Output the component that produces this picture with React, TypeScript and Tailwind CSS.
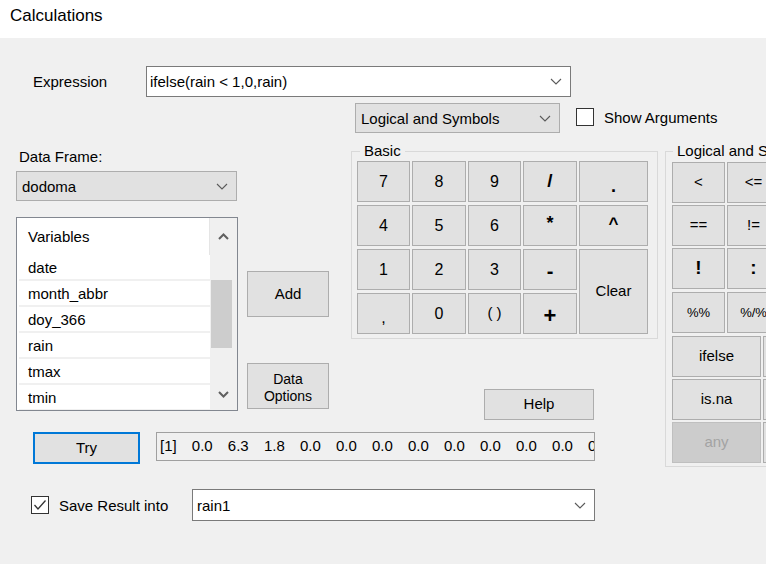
import React from "react";

function Chevron({ className = "" }: { className?: string }) {
  return (
    <svg width="12" height="7" viewBox="0 0 12 7" className={className}>
      <polyline points="1,1 6,6 11,1" fill="none" stroke="#5a5a5a" strokeWidth="1.1" />
    </svg>
  );
}

function Combo({ text, gray, className = "" }: { text: string; gray?: boolean; className?: string }) {
  return (
    <div
      className={`flex items-center justify-between border ${
        gray ? "border-[#adadad] bg-[#e1e1e1]" : "border-[#7a7a7a] bg-white"
      } ${className}`}
    >
      <span className="text-[15px] leading-none">{text}</span>
      <Chevron className="mr-[8px]" />
    </div>
  );
}

function Check({ checked }: { checked?: boolean }) {
  return (
    <div className="flex h-[18px] w-[18px] shrink-0 items-center justify-center border border-[#333333] bg-white">
      {checked && (
        <svg width="14" height="12" viewBox="0 0 14 12">
          <polyline points="1.5,6 5,10 12.5,1.5" fill="none" stroke="#333333" strokeWidth="1.3" />
        </svg>
      )}
    </div>
  );
}

function Btn({
  children,
  className = "",
  disabled,
}: {
  children?: React.ReactNode;
  className?: string;
  disabled?: boolean;
}) {
  return (
    <div
      className={`flex shrink-0 items-center justify-center border ${
        disabled ? "border-[#bfbfbf] bg-[#cccccc] text-[#a3a3a3]" : "border-[#adadad] bg-[#e1e1e1] text-black"
      } ${className}`}
    >
      {children}
    </div>
  );
}

const variables = ["date", "month_abbr", "doy_366", "rain", "tmax", "tmin"];

export default function App() {
  const smallRows = [
    { mt: "mt-[2px]", items: ["<", "<=", ">", ">="] },
    { mt: "mt-[2px]", items: ["==", "!=", "&", "|"] },
    { mt: "mt-[2px]", items: ["!", ":", "(", ")"] },
    { mt: "mt-[3px]", items: ["%%", "%/%", "%in%", "xor"] },
  ];
  const wideRows = [
    { mt: "mt-[3px]", items: ["ifelse", "which"], disabled: false },
    { mt: "mt-[2px]", items: ["is.na", "!is.na"], disabled: false },
    { mt: "mt-[2px]", items: ["any", "all"], disabled: true },
  ];

  return (
    <div className="h-[564px] w-[766px] overflow-hidden bg-[#f0f0f0] font-['Liberation_Sans',Arial,sans-serif] text-[15px] text-black">
      {/* Title bar */}
      <div className="h-[38px] bg-white pl-[10px] pt-[4px] text-[17px] leading-[24px]">Calculations</div>

      {/* Expression row */}
      <div className="mt-[28px] flex h-[31px] items-center">
        <span className="ml-[33px] w-[113px] leading-none">Expression</span>
        <Combo className="h-[31px] w-[425px] pl-[3px]" text="ifelse(rain < 1,0,rain)" />
      </div>

      {/* Logical dropdown + Show arguments */}
      <div className="mt-[6px] flex h-[30px] items-center">
        <Combo gray className="ml-[355px] h-[30px] w-[205px] pl-[5px]" text="Logical and Symbols" />
        <div className="ml-[16px] -mt-[3px]">
          <Check />
        </div>
        <span className="ml-[10px] -mt-[2px] leading-none">Show Arguments</span>
      </div>

      {/* Main */}
      <div className="flex items-start">
        <div className="w-[657px] shrink-0">
          <div className="flex items-start">
            {/* Left panel */}
            <div className="ml-[16px] w-[313px]">
              <div className="ml-[3px] mt-[15px] leading-[18px]">Data Frame:</div>
              <Combo gray className="mt-[5px] h-[30px] w-[221px] pl-[5px]" text="dodoma" />
              <div className="mt-[16px] flex items-start">
                {/* Listbox */}
                <div className="flex h-[194px] w-[222px] overflow-hidden border border-[#828790] bg-white">
                  <div className="w-[193px] pl-[2px]">
                    <div className="flex h-[37px] items-center border-r border-[#e5e5e5] pl-[9px] pt-[1px]">Variables</div>
                    {variables.map((v) => (
                      <div key={v} className="flex h-[26px] items-center border-b-2 border-[#f0f0f0] pl-[9px] pt-[3px]">
                        {v}
                      </div>
                    ))}
                  </div>
                  <div className="relative flex w-[27px] flex-col items-center bg-[#f0f0f0]">
                    <svg width="11" height="7" viewBox="0 0 11 7" className="mt-[15px]">
                      <polyline points="1,6 5.5,1.5 10,6" fill="none" stroke="#606060" strokeWidth="2" />
                    </svg>
                    <div className="ml-[-4px] mt-[40px] h-[68px] w-[21px] bg-[#cdcdcd]" />
                    <svg width="11" height="7" viewBox="0 0 11 7" className="mt-[43px]">
                      <polyline points="1,1 5.5,5.5 10,1" fill="none" stroke="#606060" strokeWidth="2" />
                    </svg>
                  </div>
                </div>
                <div className="ml-[9px] flex flex-col">
                  <Btn className="mt-[54px] h-[46px] w-[82px]">Add</Btn>
                  <Btn className="mt-[46px] h-[46px] w-[82px] flex-col pt-[3px] text-[14px] leading-[17px]">
                    <span>Data</span>
                    <span>Options</span>
                  </Btn>
                </div>
              </div>
            </div>

            {/* Basic group + Help */}
            <div className="ml-[22px]">
              <fieldset className="mt-[9px] w-[307px] border border-[#d9d9d9] pb-[4px] pl-[5px] pr-[8px]">
                <legend className="ml-[3px] px-[4px] leading-[18px]">Basic</legend>
                <div className="mt-[1px] grid grid-cols-[53px_54px_53px_54px_69px] grid-rows-[41px_41px_41px_41px] gap-x-[2px] gap-y-[3px] text-[16px]">
                  <Btn>7</Btn>
                  <Btn>8</Btn>
                  <Btn>9</Btn>
                  <Btn className="text-[19px] font-bold">/</Btn>
                  <Btn className="pt-[10px] text-[18px] font-bold">.</Btn>
                  <Btn>4</Btn>
                  <Btn>5</Btn>
                  <Btn>6</Btn>
                  <Btn className="pb-[4px] text-[18px] font-bold">*</Btn>
                  <Btn className="pb-[4px] text-[17px] font-bold">^</Btn>
                  <Btn>1</Btn>
                  <Btn>2</Btn>
                  <Btn>3</Btn>
                  <Btn className="pt-[2px] text-[20px] font-bold">-</Btn>
                  <Btn className="row-span-2 text-[15px]">Clear</Btn>
                  <Btn className="pt-[8px]">,</Btn>
                  <Btn>0</Btn>
                  <Btn className="text-[15px]">( )</Btn>
                  <Btn className="pt-[4px] text-[22px] font-bold">+</Btn>
                </div>
              </fieldset>
              <Btn className="ml-[133px] mt-[50px] h-[31px] w-[110px]">Help</Btn>
            </div>
          </div>

          {/* Try row */}
          <div className="mt-[12px] flex items-start">
            <div className="ml-[33px] flex h-[32px] w-[107px] items-center justify-center border-2 border-[#0078d7] bg-[#e1e1e1]">
              Try
            </div>
            <div className="ml-[16px] flex h-[29px] w-[439px] items-center overflow-hidden whitespace-nowrap border border-[#a0a0a0] bg-[#f0f0f0] pl-[3px] [word-spacing:11px]">
              [1] 0.0 6.3 1.8 0.0 0.0 0.0 0.0 0.0 0.0 0.0 0.0 0.0
            </div>
          </div>

          {/* Save row */}
          <div className="mt-[25px] flex h-[32px] items-center">
            <div className="ml-[31px]">
              <Check checked />
            </div>
            <span className="ml-[10px] w-[133px] leading-none">Save Result into</span>
            <Combo className="h-[32px] w-[403px] pl-[4px]" text="rain1" />
          </div>
        </div>

        {/* Logical and Symbols group */}
        <fieldset className="ml-[8px] mt-[9px] w-[400px] shrink-0 border border-[#d9d9d9] pb-[3px] pl-[6px]">
          <legend className="ml-[1px] whitespace-nowrap px-[4px] leading-[18px]">Logical and Symbols</legend>
          <div className="flex flex-col">
            {smallRows.map((r, i) => (
              <div key={i} className={`flex gap-x-[2px] ${r.mt}`}>
                {r.items.map((t) => (
                  <Btn
                    key={t}
                    className={`h-[41px] w-[53px] ${
                      t === "!" || t === ":" ? "text-[19px] font-bold" : t === "%%" || t === "%/%" ? "text-[13px]" : "text-[15px]"
                    }`}
                  >
                    {t}
                  </Btn>
                ))}
              </div>
            ))}
            {wideRows.map((r, i) => (
              <div key={i} className={`flex gap-x-[2px] ${r.mt}`}>
                {r.items.map((t, j) => (
                  <Btn key={t} disabled={r.disabled && j === 0} className="h-[41px] w-[89px]">
                    {t}
                  </Btn>
                ))}
              </div>
            ))}
          </div>
        </fieldset>
      </div>
    </div>
  );
}
